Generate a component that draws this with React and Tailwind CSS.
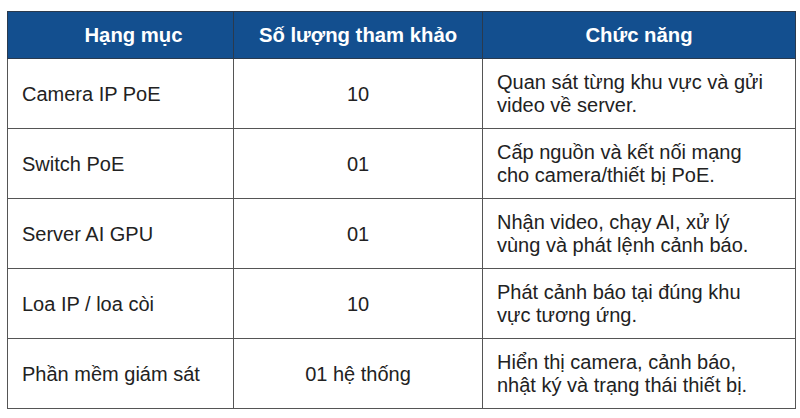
import React from "react";

const rows = [
  ["Camera IP PoE", "10", ["Quan sát từng khu vực và gửi", "video về server."]],
  ["Switch PoE", "01", ["Cấp nguồn và kết nối mạng", "cho camera/thiết bị PoE."]],
  ["Server AI GPU", "01", ["Nhận video, chạy AI, xử lý", "vùng và phát lệnh cảnh báo."]],
  ["Loa IP / loa còi", "10", ["Phát cảnh báo tại đúng khu", "vực tương ứng."]],
  ["Phần mềm giám sát", "01 hệ thống", ["Hiển thị camera, cảnh báo,", "nhật ký và trạng thái thiết bị."]],
];

export default function App() {
  return (
    <div className="w-[800px] h-[418px] bg-white pt-[11px] pl-[7px] font-['Liberation_Sans',Arial,sans-serif]">
      <table className="w-[788px] border-collapse table-fixed text-[20px] text-[#222]">
        <colgroup>
          <col className="w-[226px]" />
          <col className="w-[249px]" />
          <col className="w-[313px]" />
        </colgroup>
        <thead>
          <tr className="h-[47px] bg-[#134f8f] text-white font-bold text-[20.3px]">
            <th className="border border-[#2a3a4e] text-center pl-[26px] pt-[1px]">Hạng mục</th>
            <th className="border border-[#2a3a4e] text-center pt-[1px]">Số lượng tham khảo</th>
            <th className="border border-[#2a3a4e] text-center pt-[1px]">Chức năng</th>
          </tr>
        </thead>
        <tbody>
          {rows.map((r, i) => (
            <tr key={i} className="h-[70px]">
              <td className="border-[1.5px] border-[#555] pl-[14px] align-middle">{r[0]}</td>
              <td className="border-[1.5px] border-[#555] text-center align-middle">{r[1]}</td>
              <td className="border-[1.5px] border-[#555] pl-[14px] leading-[23px] align-middle whitespace-nowrap">
                {r[2][0]}
                <br />
                {r[2][1]}
              </td>
            </tr>
          ))}
        </tbody>
      </table>
    </div>
  );
}
